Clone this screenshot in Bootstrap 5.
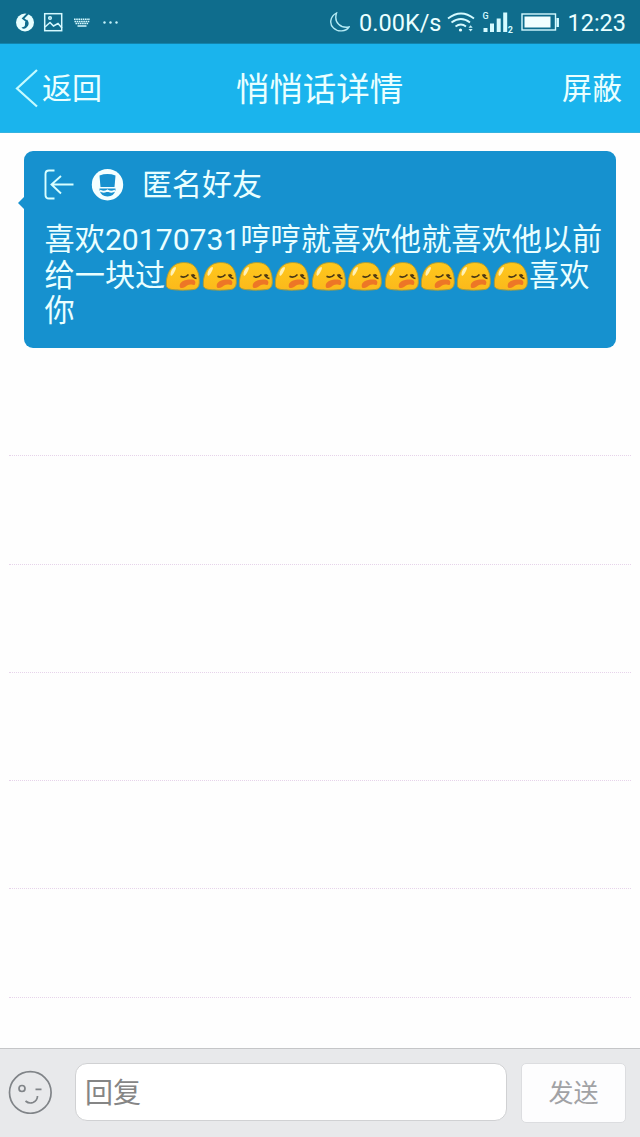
<!DOCTYPE html>
<html lang="zh-CN">
<head>
<meta charset="utf-8">
<meta name="viewport" content="width=device-width, initial-scale=1">
<title>悄悄话详情</title>
<link href="https://cdn.jsdelivr.net/npm/bootstrap@5.3.0/dist/css/bootstrap.min.css" rel="stylesheet">
<style>
body{font-family:Roboto,"Noto Sans CJK SC",sans-serif;background:#fefefe;color:#eaffff;height:1137px;overflow:hidden}
svg{display:block;flex:none}
.status{height:44px;background:#0f6d8d;font-size:23.5px;line-height:44px;padding:0 14px 0 14px;border-bottom:1px solid #1284ad}
.status span,.status time{padding-top:2px}
.topbar{height:89px;background:#1ab4ed;font-size:30px;line-height:1;padding:0 18px 0 15px;border-bottom:1px solid #34b3e0}
.topbar h1{font-size:33.5px;font-weight:400;line-height:1}
.topbar>*{flex:1 1 0}
.topbar h1{flex:none;padding:3px 0 0 2px}
.topbar span{padding-top:2px}
.bubble{margin:18px 24px 0;height:197px;border-radius:9px;background:#1691cf;padding:16px 0 0 20px}
.tail{left:-6px;top:45px}
.who{height:34px;font-size:30px;line-height:34px}
.who span{padding-top:2px}
.msg{font-size:30.15px;line-height:35.7px;margin:21px 0 0 .6px;white-space:nowrap}
.emoji{width:36.4px;height:30px}
.ruled{height:108.3px;margin:0 9px;border-bottom:1px dotted #e6d3ea}
.composer{height:89px;background:#e8e9eb;border-top:1px solid #c5c6c8;padding:14px 14px 14px 8px}
.composer .form-control{width:432px;height:58px;border:1px solid #d0d1d3;border-radius:12px;font-size:28px;padding:3px 9px 0;background:#fff}
.composer .form-control::placeholder{color:#858585;opacity:1}
.composer .btn{width:105px;height:60px;border:1px solid #dcdde0;border-radius:5px;background:#fdfdfe;color:#a1a2a5;font-size:25px;padding:2px 0 0}
</style>
</head>
<body class="d-flex flex-column">
<svg width="0" height="0" class="position-absolute" aria-hidden="true">
<defs>
<linearGradient id="skin" x2="0" y2="1"><stop offset="0" stop-color="#ffc81c"/><stop offset="1" stop-color="#fbb91b"/></linearGradient>
<symbol id="weary" viewBox="0 0 36.4 30">
<path d="M1.300 24C1 16 4 8 9 4.500C13 1 23 .3 28 4C33 8 34.600 15 34.300 22C34 26 32 28.300 28 28.600C21 29.400 11 29.300 6 28.300C3 27.700 1.400 26.500 1.300 24Z" fill="url(#skin)" stroke="#a99c3b" stroke-width="1"/>
<path d="M5.500 13C6 9 8.500 6 10.500 6C12 6.500 9.500 12 7 14.500C6 15 5.300 14.500 5.500 13Z" fill="#fff1b5"/>
<path d="M15.500 15.300Q20 17.500 23.500 13.500M26.500 13.500Q28 17 31.500 17.500M27.500 13.500L30 15" fill="none" stroke="#4b3815" stroke-width="1.600"/>
<path d="M14.700 25C14.500 20.500 20 18 27 18.500C31 19 31 22 29.500 24C28 24 25 22.600 22 24.500C20 26 18.500 27.500 16 27C15 26.800 14.800 26 14.700 25Z" fill="#ed7626"/>
</symbol>
</defs>
</svg>

<header class="status d-flex align-items-center flex-shrink-0">
<svg width="110" height="44" viewBox="14 0 110 44" fill="none" stroke="#d5f9ff" stroke-width="1.500">
<circle cx="25" cy="22.500" r="9" fill="#e8ffff" stroke="none"/>
<path d="M29 12.500L23 18.500L27 21.500" stroke="#0f6d8d" stroke-width="1.800"/><path d="M27 19.500Q30.500 24 26.500 27.500Q23.500 30 21.500 27.500Q25.500 27 25 24Q24.500 22 27 19.500Z" fill="#0f6d8d" stroke="none"/>
<rect x="44.700" y="13.700" width="17" height="17"/><path d="M45 27L50 22.500L53.500 26L58 23.500L62 28"/><circle cx="50" cy="18" r="1.300"/>
<path d="M74 19.300H90M74.500 21.500H89.500M75.500 23.500H88.500" stroke-width="1.500" stroke-dasharray="1.600 .6"/><path d="M77.500 26H86.500" stroke-width="1.500"/>
<g fill="#c5f2fa" stroke="none"><circle cx="104.500" cy="22.500" r="1.200"/><circle cx="110.500" cy="22.500" r="1.200"/><circle cx="116.500" cy="22.500" r="1.200"/></g>
</svg>
<svg class="ms-auto" width="20" height="20" viewBox="0 0 20 20" fill="none" stroke="#b5ebf5" stroke-width="1.400"><path d="M6.500 1C0 4.500-1 12 3.500 16C8 20.500 16 19.500 19 15C11 16.500 3.500 11 6.500 1Z"/></svg>
<span class="text-nowrap" style="margin-left:9px">0.00K/s</span>
<svg style="margin-left:5px" width="120" height="44" viewBox="446 0 120 44" fill="none" stroke="#d5faff" stroke-width="1.800">
<path d="M448 18.500Q461 8.500 474 18.500M451.500 22.500Q461 15.500 470 22.500M455.500 26.500Q461 22.500 466 26.500"/><circle cx="460.500" cy="30" r="1.600" fill="#eaffff" stroke="none"/>
<path d="M468.500 27.800L470.600 25.300L472.700 27.800ZM468.500 29L470.600 31.500L472.700 29Z" fill="#c5f2fa" stroke="none"/>
<text x="482.500" y="19" font-size="9" font-weight="500" fill="#d5faff" stroke="none">G</text>
<path d="M485.500 28V32M492 23.500V32M498.700 18.500V32M505.200 12.500V32" stroke-width="4"/>
<text x="507.800" y="33" font-size="9" font-weight="700" fill="#d5faff" stroke="none">2</text>
<rect x="522" y="14" width="33.500" height="16" stroke-width="1.400"/><rect x="524.500" y="16.500" width="26" height="11" fill="#f2ffff" stroke="none"/><path d="M557.700 18V27" stroke-width="2.500"/>
</svg>
<time class="text-nowrap" style="margin-left:1px">12:23</time>
</header>

<nav class="topbar d-flex align-items-center flex-shrink-0">
<a class="d-flex align-items-center text-reset text-decoration-none" href="#"><svg width="27" height="40" viewBox="0 0 27 40" fill="none" stroke="#c5fbff" stroke-width="2.200"><path d="M22 2L2 20.500L22 38.500"/></svg><span>返回</span></a>
<h1 class="m-0">悄悄话详情</h1>
<a class="d-flex justify-content-end text-reset text-decoration-none" href="#"><span>屏蔽</span></a>
</nav>

<main class="flex-grow-1 overflow-hidden">
<section class="bubble position-relative">
<svg class="tail position-absolute" width="7" height="14"><path d="M7 0V14L0 7Z" fill="#1691cf"/></svg>
<div class="who d-flex align-items-center">
<svg width="98" height="34" viewBox="44 167 98 34" fill="none" stroke="#d8ffff" stroke-width="1.900">
<path d="M54.500 170.500H49Q45.500 170.500 45.500 174V195Q45.500 198.500 49 198.500H54.500M73.500 184.500H51.500M61 176L51.500 184.500L61 193.500"/>
<circle cx="107.500" cy="184.700" r="15.700" fill="#f4ffff" stroke="none"/>
<path d="M99.500 175.500Q107.500 172.700 115.500 175.500L114.500 187H100.500Z" fill="#1691cf" stroke="none"/>
<path d="M99.500 188.500H115.500V190Q114 196.500 107.500 196.500Q101 196.500 99.500 190Z" fill="#1691cf" stroke="none"/>
<path d="M100 190.700Q104 192.700 107.500 190.500Q111 192.700 115 190.700" stroke="#f4ffff" stroke-width="2"/>
</svg>
<span>匿名好友</span>
</div>
<div class="msg">
<div>喜欢20170731哼哼就喜欢他就喜欢他以前</div>
<div class="d-flex align-items-center">给一块过<svg class="emoji"><use href="#weary"/></svg><svg class="emoji"><use href="#weary"/></svg><svg class="emoji"><use href="#weary"/></svg><svg class="emoji"><use href="#weary"/></svg><svg class="emoji"><use href="#weary"/></svg><svg class="emoji"><use href="#weary"/></svg><svg class="emoji"><use href="#weary"/></svg><svg class="emoji"><use href="#weary"/></svg><svg class="emoji"><use href="#weary"/></svg><svg class="emoji"><use href="#weary"/></svg>喜欢</div>
<div>你</div>
</div>
</section>
<div class="ruled"></div><div class="ruled"></div><div class="ruled"></div><div class="ruled"></div><div class="ruled"></div><div class="ruled"></div>
</main>

<form class="composer d-flex align-items-start flex-shrink-0">
<svg style="margin:7px 23px 0 0" width="44" height="44" viewBox="8 1070 44 44" fill="none" stroke="#808488" stroke-width="1.700"><circle cx="30.300" cy="1092.500" r="20.800"/><circle cx="22" cy="1088.500" r="3"/><path d="M35.500 1089.300H41.500M25.500 1101Q29 1104 33 1102.500Q37.500 1100.500 37.500 1096"/></svg>
<input class="form-control" type="text" placeholder="回复" aria-label="回复">
<button class="btn ms-auto" type="button">发送</button>
</form>
<script src="https://cdn.jsdelivr.net/npm/bootstrap@5.3.0/dist/js/bootstrap.bundle.min.js"></script>
</body>
</html>
